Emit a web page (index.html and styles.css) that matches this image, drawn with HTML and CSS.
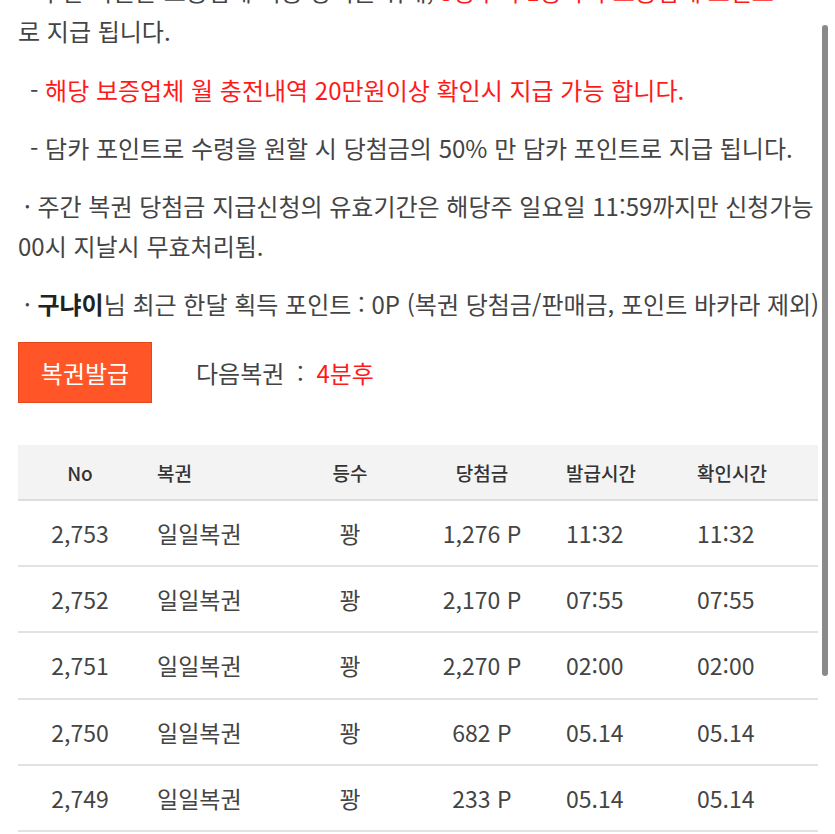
FILE: index.html
```html
<!DOCTYPE html>
<html lang="ko">
<head>
<meta charset="utf-8">
<title>복권</title>
<link rel="stylesheet" href="styles.css">
</head>
<body>
<div class="page">
  <p class="note first">&nbsp;- 주간 복권은 보증업체 이용 장려를 위해, <span class="red">5등부터 1등까지 보증업체 포인트</span><br>로 지급 됩니다.</p>
  <p class="note dash">- <span class="red">해당 보증업체 월 충전내역 20만원이상 확인시 지급 가능 합니다.</span></p>
  <p class="note dash">- 담카 포인트로 수령을 원할 시 당첨금의 50% 만 담카 포인트로 지급 됩니다.</p>
  <p class="note dot">· 주간 복권 당첨금 지급신청의 유효기간은 해당주 일요일 11:59까지만 신청가능 00시 지날시 무효처리됨.</p>
  <p class="note dot single">· <b>구냐이</b>님 최근 한달 획득 포인트 : 0P (복권 당첨금/판매금, 포인트 바카라 제외)</p>

  <div class="issue">
    <button class="issue-btn" type="button">복권발급</button>
    <span class="next">다음복권 : <span class="red">4분후</span></span>
  </div>

  <div class="table">
    <div class="row head">
      <div class="c c1">No</div>
      <div class="c c2">복권</div>
      <div class="c c3">등수</div>
      <div class="c c4">당첨금</div>
      <div class="c c5">발급시간</div>
      <div class="c c6">확인시간</div>
    </div>
    <div class="row">
      <div class="c c1">2,753</div><div class="c c2">일일복권</div><div class="c c3">꽝</div><div class="c c4">1,276 P</div><div class="c c5">11:32</div><div class="c c6">11:32</div>
    </div>
    <div class="row">
      <div class="c c1">2,752</div><div class="c c2">일일복권</div><div class="c c3">꽝</div><div class="c c4">2,170 P</div><div class="c c5">07:55</div><div class="c c6">07:55</div>
    </div>
    <div class="row">
      <div class="c c1">2,751</div><div class="c c2">일일복권</div><div class="c c3">꽝</div><div class="c c4">2,270 P</div><div class="c c5">02:00</div><div class="c c6">02:00</div>
    </div>
    <div class="row">
      <div class="c c1">2,750</div><div class="c c2">일일복권</div><div class="c c3">꽝</div><div class="c c4">682 P</div><div class="c c5">05.14</div><div class="c c6">05.14</div>
    </div>
    <div class="row">
      <div class="c c1">2,749</div><div class="c c2">일일복권</div><div class="c c3">꽝</div><div class="c c4">233 P</div><div class="c c5">05.14</div><div class="c c6">05.14</div>
    </div>
  </div>
</div>
<div class="scrollbar"></div>
</body>
</html>
```

FILE: styles.css
```css
html, body {
  margin: 0;
  padding: 0;
  background: #ffffff;
  overflow: hidden;
}
body {
  font-family: "Noto Sans CJK KR", "Noto Sans", sans-serif;
  color: #444444;
  width: 835px;
  height: 834px;
  position: relative;
}
.page {
  padding-left: 18px;
}
.note {
  margin: 0 0 18px 0;
  font-size: 24px;
  line-height: 40px;
  max-width: 800px;
}
.note.first {
  margin-top: -29px;
  margin-bottom: 19px;
  white-space: nowrap;
}
.note.single {
  white-space: nowrap;
}
.note.dash {
  padding-left: 12px;
}
.note.dot {
  text-indent: 6px;
}
.note b {
  font-weight: 700;
  color: #222;
}
.red {
  color: #ff1a1a;
}
.issue {
  display: flex;
  align-items: center;
  gap: 44px;
}
.issue-btn {
  width: 134px;
  height: 61px;
  background: #ff5527;
  border: 1px solid #e24a1e;
  color: #ffffff;
  font-family: inherit;
  font-size: 24px;
  padding: 0;
}
.next {
  font-size: 24px;
  color: #444;
  word-spacing: 6px;
}
.table {
  margin-top: 42px;
  width: 800px;
}
.row {
  display: grid;
  grid-template-columns: 124px 150px 116px 148px 129px 133px;
  height: 64.2px;
  align-items: center;
  border-bottom: 2px solid #e2e2e2;
  font-size: 23px;
  color: #444;
}
.row.head {
  height: 54px;
  background: #f3f3f3;
  font-size: 19px;
  font-weight: 500;
  color: #333;
  border-bottom: 2px solid #dedede;
}
.c1, .c3, .c4 {
  text-align: center;
}
.c2 {
  padding-left: 15px;
}
.c5 {
  padding-left: 10px;
}
.c6 {
  padding-left: 12px;
}
.scrollbar {
  position: absolute;
  right: 7px;
  top: 25px;
  width: 6px;
  height: 651px;
  border-radius: 3px;
  background: #8a8a8a;
}
```
